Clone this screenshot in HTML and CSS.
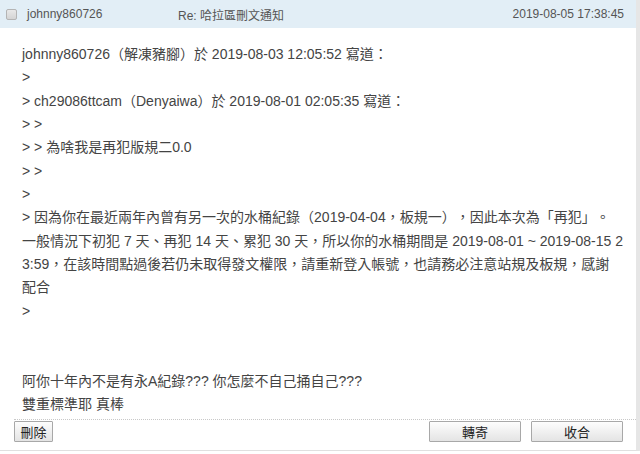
FILE: index.html
```html
<!DOCTYPE html>
<html lang="zh-Hant">

<head>
    <meta charset="UTF-8">
    <meta name="viewport" content="width=device-width, initial-scale=1.0">
    <title>站內信 - Re: 哈拉區刪文通知</title>
    <link rel="stylesheet" href="styles.css">
</head>

<body>
    <div class="mail">
        <div class="mail-head">
            <span class="check"></span>
            <span class="from">johnny860726</span>
            <span class="subject">Re: 哈拉區刪文通知</span>
            <span class="time">2019-08-05 17:38:45</span>
        </div>

        <div class="mail-body">
            johnny860726（解凍豬腳）於 2019-08-03 12:05:52 寫道：<br>
            &gt;<br>
            &gt; ch29086ttcam（Denyaiwa）於 2019-08-01 02:05:35 寫道：<br>
            &gt; &gt;<br>
            &gt; &gt; 為啥我是再犯版規二0.0<br>
            &gt; &gt;<br>
            &gt;<br>
            &gt; 因為你在最近兩年內曾有另一次的水桶紀錄（2019-04-04，板規一），因此本次為「再犯」。<br>
            一般情況下初犯 7 天、再犯 14 天、累犯 30 天，所以你的水桶期間是 2019-08-01 ~ 2019-08-15 23:59，在該時間點過後若仍未取得發文權限，請重新登入帳號，也請務必注意站規及板規，感謝配合<br>
            &gt;<br>
            <br>
            <br>
            阿你十年內不是有永A紀錄??? 你怎麼不自己捅自己???<br>
            雙重標準耶 真棒
        </div>

        <div class="mail-actions">
            <button class="btn btn-small">刪除</button>
            <span class="spacer"></span>
            <button class="btn">轉寄</button>
            <button class="btn">收合</button>
        </div>
    </div>
</body>

</html>
```

FILE: styles.css
```css
body {
    margin: 0;
    background-color: #fff;
    font-family: 'Liberation Sans', 'Noto Sans CJK TC', sans-serif;
    color: #444;
}

.mail {
    width: 636px;
    border-right: 4px solid #e6e6e6;
    border-bottom: 1px solid #e0e0e0;
    padding-bottom: 8px;
}

.mail-head {
    display: flex;
    align-items: center;
    height: 28px;
    background-color: #e2eef6;
    font-size: 12px;
    color: #555;
    padding: 0 12px 0 6px;
}

.check {
    width: 9px;
    height: 9px;
    border: 1px solid #b4b4b4;
    border-radius: 2px;
    background: linear-gradient(#e8e8e8, #d4d4d4);
    margin-right: 10px;
}

.from {
    width: 151px;
}

.subject {
    flex: 1;
}

.mail-body {
    padding: 15px 13px 3px 22px;
    font-size: 14px;
    line-height: 23.33px;
    word-break: break-all;
    text-spacing-trim: space-all;
}

.mail-actions {
    display: flex;
    gap: 10px;
    margin-left: 14px;
    padding: 1px 13px 0 0;
    border-top: 1px dotted #c8c8c8;
}

.spacer {
    flex: 1;
}

.btn {
    width: 92px;
    height: 21px;
    padding: 0;
    border: 1px solid #a8a8a8;
    border-radius: 1px;
    background: linear-gradient(#fdfdfd, #e4e4e4);
    font-family: 'Liberation Sans', 'Noto Sans CJK TC', sans-serif;
    font-size: 13px;
    color: #222;
    cursor: pointer;
}

.btn-small {
    width: 39px;
}
```
